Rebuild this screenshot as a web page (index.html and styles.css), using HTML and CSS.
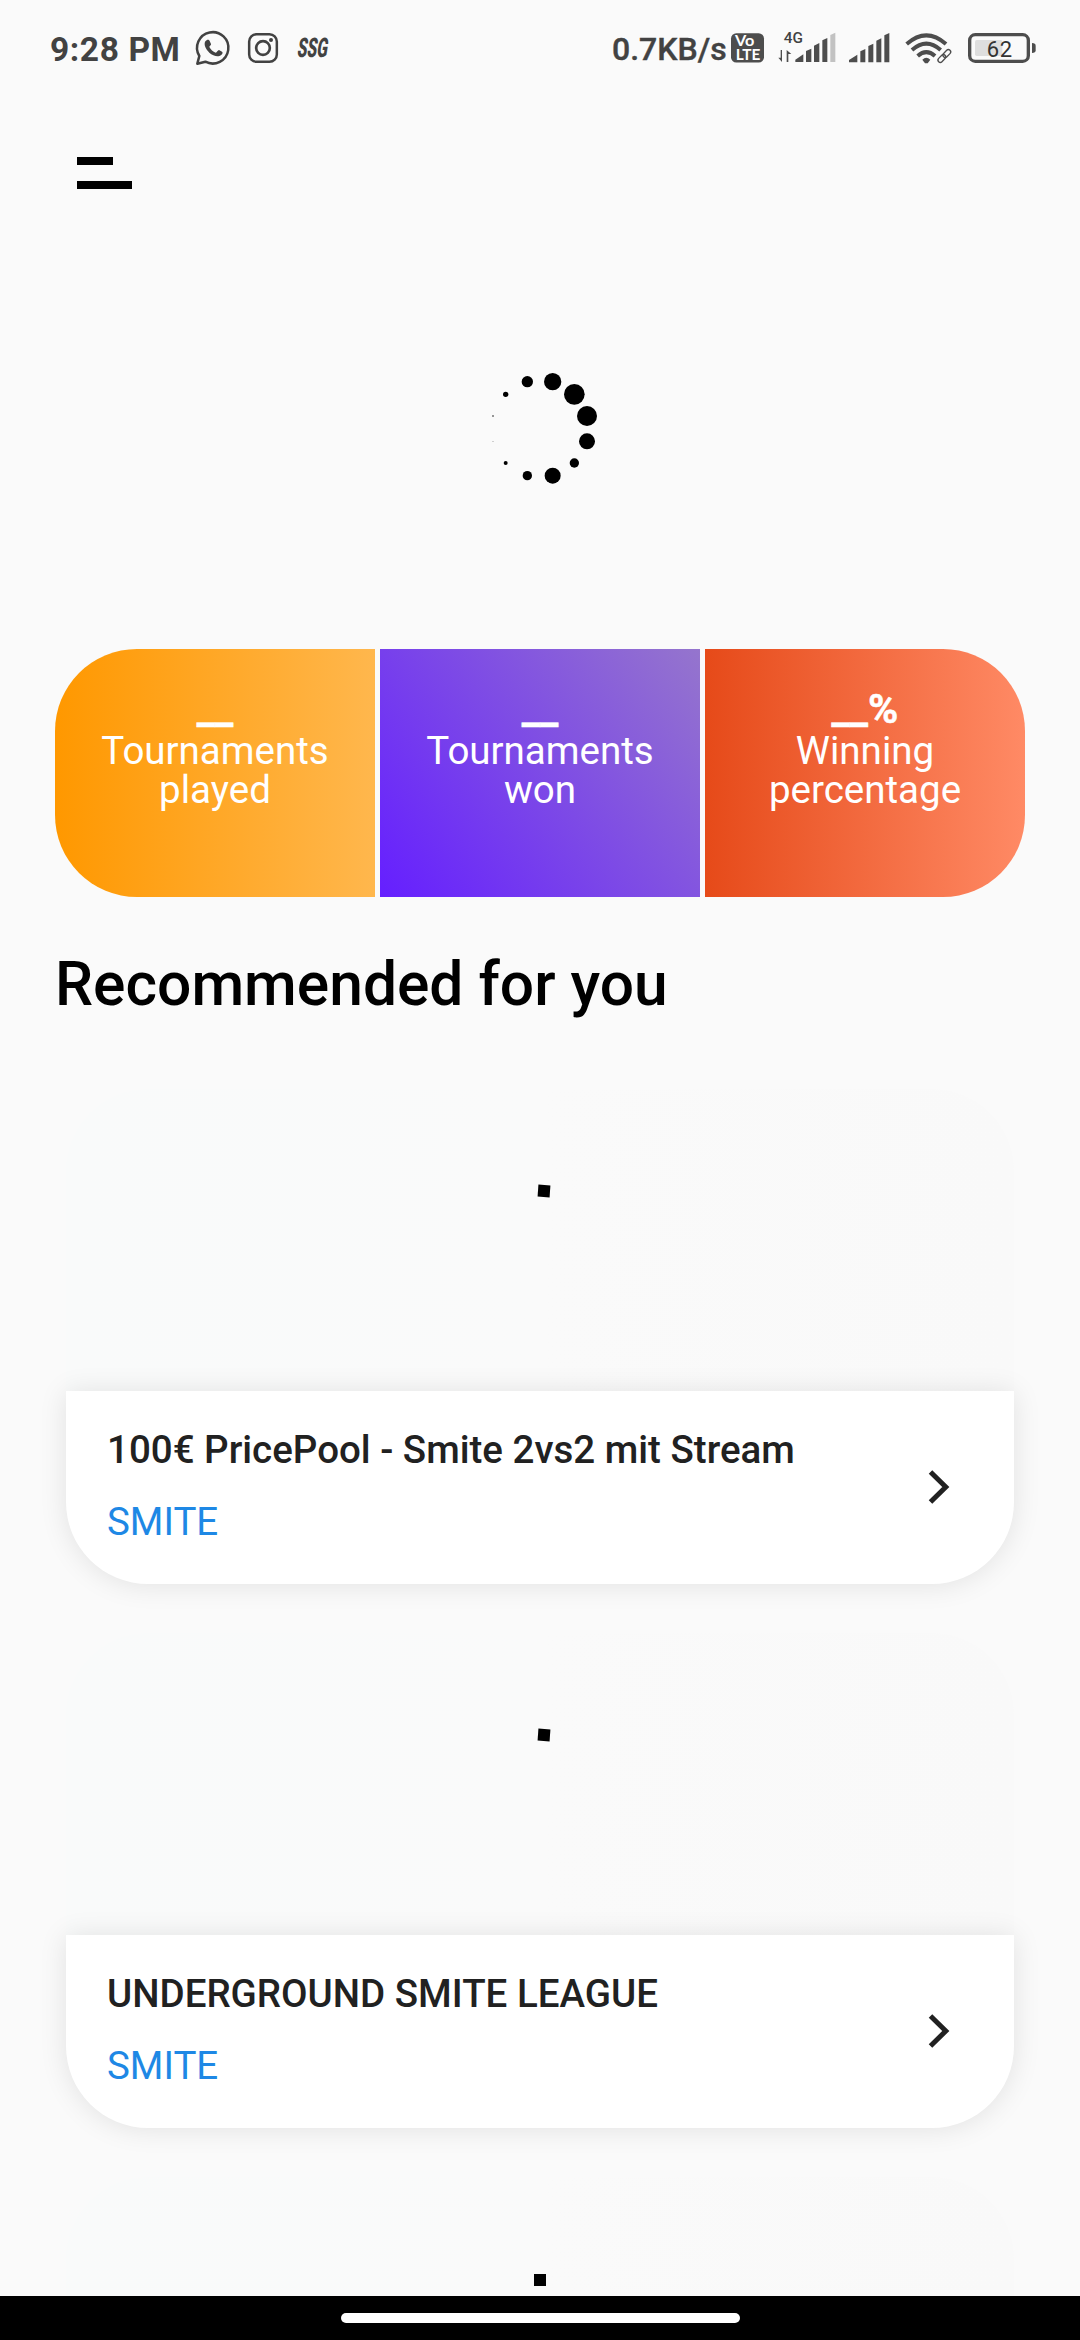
FILE: index.html
```html
<!DOCTYPE html>
<html lang="en">
<head>
<meta charset="utf-8">
<title>Tournaments</title>
<link rel="stylesheet" href="styles.css">
</head>
<body>
<div class="screen">
  <header class="status">
    <div class="status-left">
      <span class="time">9:28 PM</span>
      <svg class="icon" width="34" height="34" viewBox="498 63 102 102">
        <path d="M502 161 L508 138 A47 47 0 1 1 526 155 Z" fill="none" stroke="#424242" stroke-width="7.500" stroke-linejoin="round"/>
        <path d="M526 94 C531 87 537 88 539 93 L543 102 C544 106 538 108 538 111 C542 119 549 125 557 128 C561 128 563 120 567 120 L576 125 C581 129 574 136 568 138 C560 141 547 136 538 128 C528 119 520 104 526 94 Z" fill="#424242"/>
      </svg>
      <svg class="icon insta" width="30" height="30" viewBox="654 69 90 90">
        <rect x="657.500" y="72.500" width="83" height="83" rx="22" fill="none" stroke="#424242" stroke-width="7.500"/>
        <circle cx="699" cy="114" r="20.500" fill="none" stroke="#424242" stroke-width="8"/>
        <circle cx="723" cy="90" r="6" fill="#424242"/>
      </svg>
      <span class="ssg">SSG</span>
    </div>
    <div class="status-right">
      <span class="speed">0.7KB/s</span>
      <svg class="icon volte" width="33" height="30" viewBox="390 71 99 89">
        <rect x="390" y="71" width="99" height="88" rx="16" fill="#4d4d4d"/>
        <text class="volte-text" x="402" y="109" textLength="58" lengthAdjust="spacingAndGlyphs">Vo</text>
        <text class="volte-text" x="404" y="150" textLength="74" lengthAdjust="spacingAndGlyphs">LTE</text>
      </svg>
      <svg class="icon signal-a" width="58" height="33" viewBox="530 60 174 99">
        <text class="net" x="547" y="99" textLength="58">4G</text>
        <path d="M542 120V156L531 143H538V120ZM556 156V120L570 132H561V156Z" fill="#4d4d4d"/>
        <path d="M582 156V149L606 133V156ZM614 156V123L630 116V156ZM638 156V107L654 99V156ZM663 156V91L678 84V156Z" fill="#4d4d4d"/>
        <path d="M687 156V75L702 68V156Z" fill="#c2c2c2"/>
      </svg>
      <svg class="icon signal-b" width="41" height="30" viewBox="53 68 123 90">
        <path d="M53 156V149L78 133V156ZM87 156V123L102 116V156ZM111 156V107L126 100V156ZM135 156V91L150 84V156ZM159 156V75L174 68V156Z" fill="#4d4d4d"/>
      </svg>
      <svg class="icon wifi" width="48" height="31" viewBox="221 67 144 93">
        <g fill="none" stroke="#4d4d4d" stroke-width="12">
          <path d="M226 100Q285 48 344 100"/>
          <path d="M242 118Q285 80 328 118"/>
          <path d="M259 136Q285 113 311 136"/>
        </g>
        <path d="M273 147Q285 135 297 147L289 158H281Z" fill="#4d4d4d"/>
        <g transform="rotate(-45 339 136)" fill="none" stroke="#fafafa" stroke-width="10">
          <rect x="315" y="129" width="27" height="14" rx="7"/><rect x="336" y="129" width="27" height="14" rx="7"/>
        </g>
        <g transform="rotate(-45 339 136)" fill="none" stroke="#4d4d4d" stroke-width="4">
          <rect x="315" y="129" width="27" height="14" rx="7"/><rect x="336" y="129" width="27" height="14" rx="7"/>
        </g>
      </svg>
      <svg class="icon battery" width="68" height="30" viewBox="411 69 204 90">
        <rect x="416" y="74" width="176" height="80" rx="17" fill="none" stroke="#4d4d4d" stroke-width="10"/>
        <rect x="432" y="90" width="82" height="48" rx="5" fill="#dedede"/>
        <path d="M603 99Q614 99 614 107V121Q614 129 603 129Z" fill="#4d4d4d"/>
        <text class="level" x="467" y="140" textLength="76">62</text>
      </svg>
    </div>
  </header>

  <button class="menu" aria-label="Menu"><span class="short"></span><span class="long"></span></button>

  <div class="loader">
    <svg width="150" height="150" viewBox="0 0 450 450">
      <circle cx="172" cy="95" r="17"/><circle cx="248" cy="95" r="26"/>
      <circle cx="313" cy="133" r="31"/><circle cx="351" cy="198" r="30"/>
      <circle cx="351" cy="274" r="24"/><circle cx="313" cy="339" r="14"/>
      <circle cx="248" cy="377" r="24"/><circle cx="172" cy="377" r="14"/>
      <circle cx="107" cy="339" r="6"/><circle cx="69" cy="274" r="1.200"/>
      <circle cx="69" cy="198" r="2.200"/><circle cx="107" cy="133" r="8"/>
    </svg>
  </div>

  <section class="stats">
    <div class="stat played"><b>__</b><span>Tournaments<br>played</span></div>
    <div class="stat won"><b>__</b><span>Tournaments<br>won</span></div>
    <div class="stat rate"><b>__%</b><span>Winning<br>percentage</span></div>
  </section>

  <h1>Recommended for you</h1>

  <main class="list">
    <article class="card">
      <div class="cover"><i class="spin tilted"></i></div>
      <div class="info">
        <div class="labels"><h2>100€ PricePool - Smite 2vs2 mit Stream</h2><p>SMITE</p></div>
        <svg class="chevron" width="22" height="36" viewBox="0 0 22 36"><path d="M2.500 3L17.800 18L2.500 33" fill="none" stroke="#212121" stroke-width="5"/></svg>
      </div>
    </article>
    <article class="card">
      <div class="cover"><i class="spin tilted"></i></div>
      <div class="info">
        <div class="labels"><h2>UNDERGROUND SMITE LEAGUE</h2><p>SMITE</p></div>
        <svg class="chevron" width="22" height="36" viewBox="0 0 22 36"><path d="M2.500 3L17.800 18L2.500 33" fill="none" stroke="#212121" stroke-width="5"/></svg>
      </div>
    </article>
    <article class="card">
      <div class="cover plain"><i class="spin"></i></div>
    </article>
  </main>

  <footer class="navbar"><span class="pill"></span></footer>
</div>
</body>
</html>
```

FILE: styles.css
```css
* { box-sizing: border-box; }
body { margin: 0; background: #fafafa; font-family: Roboto, "Liberation Sans", sans-serif; }
.screen { width: 1080px; height: 2340px; display: flex; flex-direction: column; overflow: hidden; }

.status { height: 96px; flex: none; padding: 0 44px 0 50px; display: flex; justify-content: space-between; align-items: center; color: #424242; }
.status-left, .status-right { display: flex; align-items: center; }
.icon { flex: none; display: block; overflow: visible; }
.time { width: 146px; font-size: 33.500px; line-height: 40px; font-weight: 700; letter-spacing: 0.6px; white-space: nowrap; padding-top: 3px; }
.insta { margin-left: 18px; }
.ssg { margin-left: 20px; width: 32px; font-size: 27px; line-height: 30px; font-weight: 900; transform: scaleX(0.58) skewX(-16deg); transform-origin: left; white-space: nowrap; }
.speed { width: 119px; font-size: 32px; line-height: 40px; font-weight: 500; -webkit-text-stroke: 0.4px #424242; white-space: nowrap; padding-top: 2px; }
.volte-text { font: 700 43px Lato, sans-serif; fill: #fff; }
.net { font: 500 46px Roboto, sans-serif; fill: #424242; }
.signal-a { margin-left: 14px; margin-bottom: 3px; }
.signal-b { margin-left: 13px; }
.wifi { margin-left: 15px; }
.battery { margin-left: 15px; }
.level { font: 400 66px Roboto, sans-serif; fill: #333; }

.menu { flex: none; border: 0; background: none; margin: 61px 0 0 77px; padding: 0; width: 55px; height: 32px; display: flex; flex-direction: column; justify-content: space-between; }
.menu span { display: block; height: 8px; background: #000; }
.menu .short { width: 36px; }
.menu .long { width: 55px; }

.loader { flex: none; height: 459.500px; padding-top: 161px; padding-left: 470px; }
.loader svg { display: block; }

.stats { flex: none; height: 248px; margin: 0 55px; display: grid; grid-template-columns: repeat(3, 1fr); gap: 5px; }
.stat { display: flex; flex-direction: column; align-items: center; padding-top: 38px; color: #fff; text-align: center; font-size: 38.500px; line-height: 39px; }
.stat b { height: 44px; font-size: 41px; line-height: 44px; -webkit-text-stroke: 0.5px #fff; }
.played { background: linear-gradient(90deg, #ff9800, #ffb74d); border-radius: 82px 0 0 82px; }
.won { background: linear-gradient(52.2deg, #651fff, #9575cd); }
.rate { background: linear-gradient(90deg, #e64a19, #ff8a65); border-radius: 0 82px 82px 0; }

h1 { flex: none; margin: 48px 0 0 55px; font-size: 60.500px; line-height: 80px; font-weight: 500; color: #000; white-space: nowrap; }

.list { flex: 1; min-height: 0; overflow: hidden; padding: 64px 66px 0; }
.card { height: 495px; margin-bottom: 49px; }
.cover { height: 302.500px; padding: 96px 0 0 472px; border-radius: 82px 82px 0 0; background: linear-gradient(90deg, #f9fafa, #fafafa 50%, #f9f9f9); }
.plain { padding: 97px 0 0 468px; }
.spin { display: block; width: 12px; height: 12px; background: #000; }
.tilted { transform: rotate(4deg); }
.info { height: 192.500px; background: #fff; border-radius: 0 0 82px 82px; box-shadow: 0 1px 28px rgba(0, 0, 0, 0.1); padding: 35px 64px 0 41px; display: flex; justify-content: space-between; }
h2 { margin: 0; font-size: 38.500px; line-height: 48px; font-weight: 500; color: #212121; white-space: nowrap; }
p { margin: 24px 0 0; font-size: 38.500px; line-height: 48px; color: #1e88e5; }
.chevron { margin-top: 43px; }

.navbar { flex: none; height: 44px; background: #000; display: flex; justify-content: center; padding-top: 17px; }
.pill { width: 399px; height: 10px; border-radius: 5px; background: #fff; }
```
